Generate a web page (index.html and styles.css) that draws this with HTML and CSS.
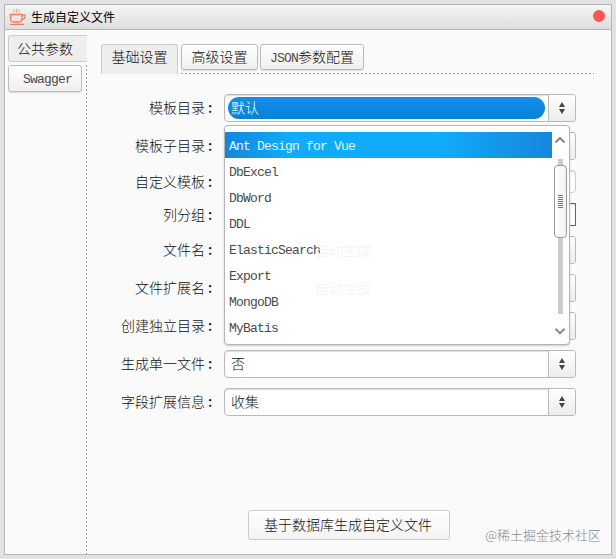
FILE: index.html
```
<!DOCTYPE html>
<html lang="zh-CN">
<head>
<meta charset="utf-8">
<title>生成自定义文件</title>
<link rel="stylesheet" href="styles.css">
</head>
<body>
<div class="window">
  <header class="titlebar">
    <svg class="logo" width="18" height="18" viewBox="0 0 18 18" fill="none" stroke="#f47c5c" stroke-width="1.3">
      <path d="M1.5 6.5H13V10.5Q13 14 10 14H5Q1.5 14 1.5 10.5Z"/>
      <path d="M13 7.2H16.2V8.5Q16 11.4 12.6 11.6M1 16.4H15"/>
      <path d="M5 1.8V4.6M7.7 .8V4.6M10.2 1.8V4.6" stroke-width="1" stroke-dasharray="1.5 .7"/>
    </svg>
    <h1 class="title">生成自定义文件</h1>
    <span class="close"></span>
  </header>
  <div class="body">
    <nav class="side">
      <div class="side-tab active">公共参数</div>
      <div class="side-tab"><span class="latin">Swagger</span></div>
      <div class="side-line"></div>
    </nav>
    <main class="main">
      <div class="tabs">
        <div class="tab active">基础设置</div>
        <div class="tab">高级设置</div>
        <div class="tab wide"><span class="latin">JSON</span>参数配置</div>
        <div class="tabs-line"></div>
      </div>
      <div class="form">
        <label>模板目录<i>:</i></label>
        <div class="select focus"><span class="value">默认</span><b class="arrow"><svg width="8" height="12" viewBox="0 0 8 12"><path d="M4 0L7 5H1ZM4 12L7 7H1Z"/></svg></b>
          <div class="popup">
            <ul class="list">
              <li class="selected">Ant Design for Vue</li>
              <li>DbExcel</li>
              <li>DbWord</li>
              <li>DDL</li>
              <li>ElasticSearch</li>
              <li>Export</li>
              <li>MongoDB</li>
              <li>MyBatis</li>
            </ul>
            <div class="ghost">自动生成</div>
            <div class="ghost second">自动生成</div>
            <div class="scroll">
              <svg width="12" height="8" viewBox="0 0 12 8"><path d="M1.5 6.5L6 2L10.5 6.5"/></svg>
              <div class="track"><div class="thumb"><span class="grip"></span></div></div>
              <svg width="12" height="8" viewBox="0 0 12 8"><path d="M1.5 1.8L6 6.3L10.5 1.8"/></svg>
            </div>
          </div>
        </div>
        <label>模板子目录<i>:</i></label>
        <div class="select"><span class="value"></span><b class="arrow"></b></div>
        <label>自定义模板<i>:</i></label>
        <div class="input"></div>
        <label>列分组<i>:</i></label>
        <div class="input plain"></div>
        <label>文件名<i>:</i></label>
        <div class="select"><span class="value"></span><b class="arrow"></b></div>
        <label>文件扩展名<i>:</i></label>
        <div class="select"><span class="value"></span><b class="arrow"></b></div>
        <label>创建独立目录<i>:</i></label>
        <div class="select"><span class="value"></span><b class="arrow"></b></div>
        <label>生成单一文件<i>:</i></label>
        <div class="select"><span class="value">否</span><b class="arrow"><svg width="8" height="12" viewBox="0 0 8 12"><path d="M4 0L7 5H1ZM4 12L7 7H1Z"/></svg></b></div>
        <label>字段扩展信息<i>:</i></label>
        <div class="select"><span class="value">收集</span><b class="arrow"><svg width="8" height="12" viewBox="0 0 8 12"><path d="M4 0L7 5H1ZM4 12L7 7H1Z"/></svg></b></div>
      </div>
      <button class="generate">基于数据库生成自定义文件</button>
    </main>
  </div>
  <div class="watermark">@稀土掘金技术社区</div>
</div>
</body>
</html>
```
FILE: styles.css
```
* { box-sizing: border-box; }
body {
  margin: 0;
  height: 559px;
  padding: 4px;
  background: #e2e2e2;
  overflow: hidden;
  font: 300 14px/20px "Noto Sans CJK SC", sans-serif;
  color: #111;
}
.latin, .list {
  font-family: "Liberation Mono", monospace;
  font-size: 13px;
  font-weight: 400;
  letter-spacing: -0.8px;
  color: #4a4a4a;
}
.window {
  position: relative;
  width: 608px;
  height: 551px;
  border: 1px solid #b5b5b5;
  background: #fafafa;
  display: flex;
  flex-direction: column;
}
.titlebar {
  height: 25px;
  flex: none;
  display: flex;
  align-items: center;
  padding: 0 6px 0 4px;
  background: linear-gradient(#f5f5f5, #dedede);
  border-bottom: 1px solid #b5b5b5;
}
.title {
  margin: 0 auto 0 4px;
  font-size: 12px;
  font-weight: 400;
  color: #000;
}
.close {
  width: 12px;
  height: 12px;
  border-radius: 50%;
  background: #fc5753;
  margin-bottom: 2px;
}
.body { flex: 1; display: flex; }
.side {
  width: 82px;
  padding: 5px 0 0 3px;
  display: flex;
  flex-direction: column;
}
.side-tab {
  width: 74px;
  height: 27px;
  flex: none;
  margin-bottom: 3px;
  padding-left: 14px;
  border: 1px solid #bbb;
  border-radius: 3px;
  background: linear-gradient(#fff, #efefef);
  box-shadow: 0 1px 1px #ddd;
  line-height: 23px;
}
.side-tab.active {
  width: 79px;
  padding-left: 8px;
  border-color: #ccc;
  border-right: 0;
  border-radius: 3px 0 0 3px;
  background: #eee;
  box-shadow: none;
  line-height: 24px;
}
.side-line {
  flex: 1;
  margin-top: -30px;
  background: repeating-linear-gradient(#999 0 2px, transparent 2px 4px) right / 1px 100% no-repeat;
}
.main {
  flex: 1;
  display: flex;
  flex-direction: column;
  align-items: flex-start;
}
.tabs {
  display: flex;
  width: 493px;
  height: 30px;
  margin: 14px 0 0 14px;
}
.tab {
  height: 26px;
  width: 77px;
  margin-right: 2px;
  border: 1px solid #bbb;
  border-radius: 3px;
  background: linear-gradient(#fff, #efefef);
  box-shadow: 0 1px 1px #ddd;
  line-height: 22px;
  text-align: center;
}
.tab.wide { width: 104px; margin: 0 -104px 0 0; }
.tab.active {
  height: 30px;
  margin-right: 3px;
  border-color: #ccc;
  border-bottom: 0;
  border-radius: 3px 3px 0 0;
  background: #eee;
  box-shadow: none;
}
.tabs-line {
  flex: 1;
  align-self: flex-end;
  height: 1px;
  margin-left: -79px;
  background: repeating-linear-gradient(90deg, #999 0 2px, transparent 2px 4px);
}
.form {
  display: grid;
  grid-template-columns: 133px 352px;
  grid-template-rows: 28px 28px 23px 23px repeat(5, 28px);
  row-gap: 10px;
  margin: 20px 0 0 4px;
  align-items: center;
}
label { text-align: right; padding: 0 5px 2px 0; white-space: nowrap; }
label i { display: inline-block; font-style: normal; text-align: left; padding-left: 3px; width: 14px; font-weight: 500; }
.select, .input {
  position: relative;
  height: 28px;
  display: flex;
  border: 1px solid #b9b9b9;
  border-radius: 4px 3px 3px 4px;
  background: #fff;
  box-shadow: inset 0 1px 1px #ddd;
}
.input { height: 23px; border-color: #ccc; border-radius: 4px; }
.input.plain { border-color: #666; border-radius: 0; }
.value { flex: 1; padding-left: 6px; line-height: 25px; }
.focus .value {
  margin: 2px 3px 2px 3px;
  padding-left: 3px;
  border-radius: 11px;
  line-height: 20px;
  color: #fff;
  background: linear-gradient(#1590e8, #0580dc);
}
.arrow {
  width: 27px;
  display: flex;
  align-items: center;
  justify-content: center;
  border-left: 1px solid #bbb;
  border-radius: 0 2px 2px 0;
  background: linear-gradient(#fff, #ececec);
  fill: #444;
}
.popup {
  position: absolute;
  z-index: 2;
  left: -1px;
  top: 30px;
  width: 346px;
  height: 220px;
  display: flex;
  border: 1px solid #b5b5b5;
  border-radius: 4px;
  background: #fff;
  box-shadow: 0 1px 2px #ccc;
}
.list {
  flex: 1;
  margin: 0;
  padding: 6px 0 0;
  list-style: none;
}
.list li { height: 26px; padding-left: 4px; line-height: 29px; }
.list .selected {
  color: #e2f6ff;
  background: linear-gradient(90deg, #1286df, #10acfb 20%, #10acfb 65%, #1686dc);
}
.ghost {
  position: absolute;
  left: 90px;
  top: 114px;
  color: #f2f2f2;
}
.ghost.second { top: 152px; }
.scroll {
  width: 17px;
  padding: 10px 2px 9px 0;
  display: flex;
  flex-direction: column;
  align-items: center;
  fill: none;
  stroke: #888;
  stroke-width: 2;
}
.track {
  width: 5px;
  height: 155px;
  margin: 15px -1px auto 0;
  padding-top: 6px;
  background: #ccc;
}
.thumb {
  width: 13px;
  height: 73px;
  margin-left: -4px;
  display: flex;
  align-items: center;
  justify-content: center;
  border: 1px solid #999;
  border-radius: 4px;
  background: linear-gradient(90deg, #fff, #f2f2f2);
}
.grip {
  width: 5px;
  height: 13px;
  background: repeating-linear-gradient(#777 0 1px, transparent 1px 2px);
}
.generate {
  width: 202px;
  height: 30px;
  margin: 94px 0 0 161px;
  padding: 0 2px 2px 0;
  border: 1px solid #ccc;
  border-radius: 3px;
  background: linear-gradient(#fff, #f3f3f3);
  font: inherit;
  color: #111;
}
.watermark {
  position: absolute;
  right: 10px;
  bottom: 9px;
  font-size: 13px;
  color: #888;
}
```
